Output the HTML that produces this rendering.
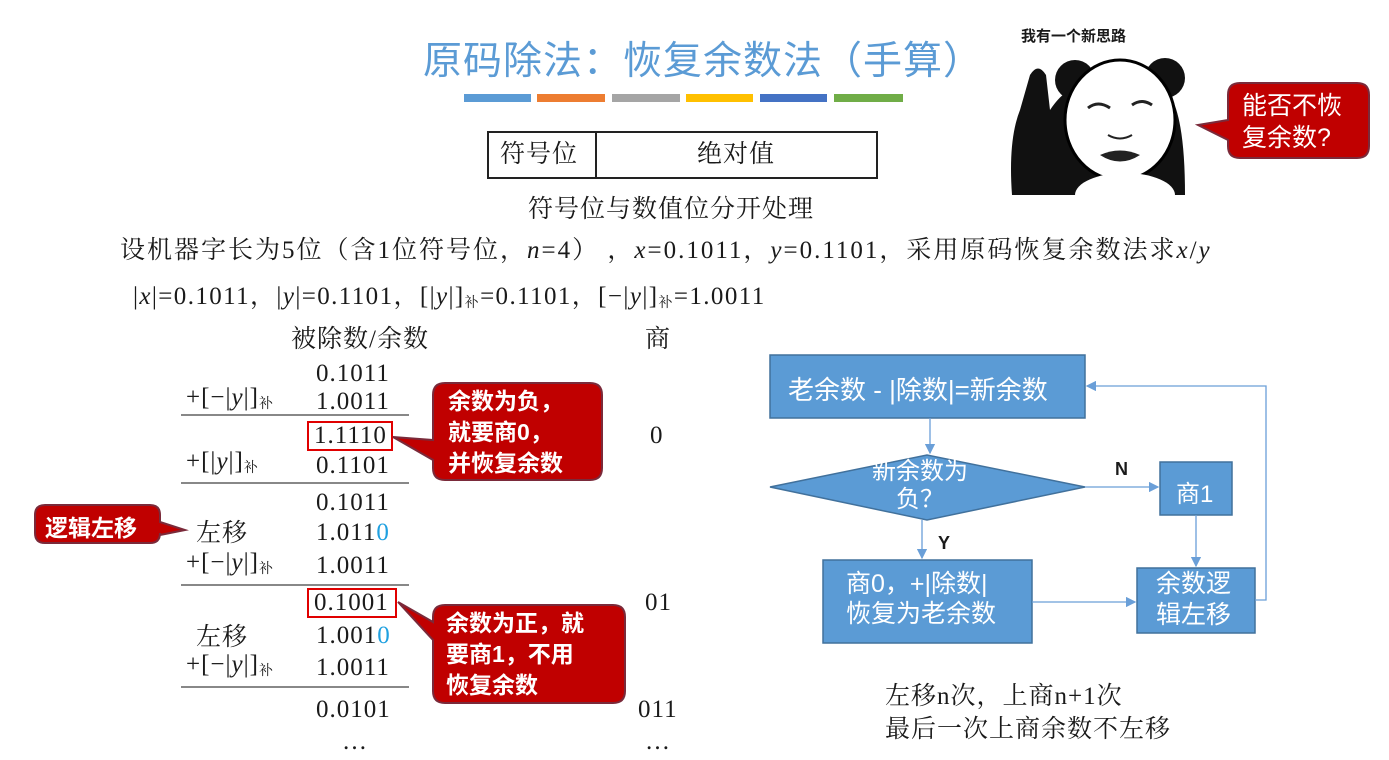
<!DOCTYPE html>
<html><head><meta charset="utf-8"><style>
body{margin:0;width:1389px;height:760px;background:#fff;position:relative;overflow:hidden;font-family:"Liberation Serif","Noto Serif CJK SC",serif;color:#1a1a1a}
.a{position:absolute;white-space:nowrap}
.s{font-family:"Liberation Sans","Noto Sans CJK SC",sans-serif}
.n{font-size:25px;letter-spacing:1px;line-height:28px}
i{font-style:italic}
sub{font-size:14px;vertical-align:-3px}
.hr{position:absolute;height:2px;background:#888}
.red{position:absolute;border:2px solid #e00000}
.blue{color:#1fa0e0}
</style></head><body>
<div class="a s" style="left:423px;top:30px;font-size:39px;color:#5b9bd5;letter-spacing:1px">原码除法：恢复余数法（手算）</div>
<div class="a" style="left:464px;top:94px;width:67px;height:8px;background:#5b9bd5"></div>
<div class="a" style="left:537px;top:94px;width:68px;height:8px;background:#ed7d31"></div>
<div class="a" style="left:612px;top:94px;width:68px;height:8px;background:#a5a5a5"></div>
<div class="a" style="left:686px;top:94px;width:67px;height:8px;background:#ffc000"></div>
<div class="a" style="left:760px;top:94px;width:67px;height:8px;background:#4472c4"></div>
<div class="a" style="left:834px;top:94px;width:69px;height:8px;background:#70ad47"></div>

<div class="a" style="left:487px;top:131px;width:387px;height:44px;border:2px solid #222"></div>
<div class="a" style="left:595px;top:131px;width:2px;height:47px;background:#222"></div>
<div class="a n" style="left:500px;top:141px">符号位</div>
<div class="a n" style="left:697px;top:141px">绝对值</div>
<div class="a n" style="left:528px;top:196px">符号位与数值位分开处理</div>
<div class="a n" style="left:120px;top:237px;letter-spacing:2px">设机器字长为5位（含1位符号位，<i>n</i>=4）&nbsp;，<i>x</i>=0.1011，<i>y</i>=0.1101，采用原码恢复余数法求<i>x</i>/<i>y</i></div>
<div class="a n" style="left:133px;top:283px;letter-spacing:1.4px">|<i>x</i>|=0.1011，|<i>y</i>|=0.1101，[|<i>y</i>|]<sub>补</sub>=0.1101，[−|<i>y</i>|]<sub>补</sub>=1.0011</div>

<div class="a n" style="left:291px;top:326px">被除数/余数</div>
<div class="a n" style="left:645px;top:326px">商</div>
<div class="a n" style="left:316px;top:360px">0.1011</div>
<div class="a n" style="left:186px;top:384px">+[−|<i>y</i>|]<sub>补</sub></div>
<div class="a n" style="left:316px;top:388px">1.0011</div>
<div class="hr" style="left:181px;top:414px;width:228px"></div>
<div class="a n" style="left:314px;top:422px">1.1110</div>
<div class="red" style="left:307px;top:421px;width:82px;height:26px"></div>
<div class="a n" style="left:650px;top:422px">0</div>
<div class="a n" style="left:186px;top:448px">+[|<i>y</i>|]<sub>补</sub></div>
<div class="a n" style="left:316px;top:452px">0.1101</div>
<div class="hr" style="left:181px;top:482px;width:228px"></div>
<div class="a n" style="left:316px;top:489px">0.1011</div>
<div class="a n" style="left:196px;top:520px">左移</div>
<div class="a n" style="left:316px;top:519px">1.011<span class="blue">0</span></div>
<div class="a n" style="left:186px;top:549px">+[−|<i>y</i>|]<sub>补</sub></div>
<div class="a n" style="left:316px;top:552px">1.0011</div>
<div class="hr" style="left:181px;top:584px;width:228px"></div>
<div class="a n" style="left:314px;top:589px">0.1001</div>
<div class="red" style="left:307px;top:588px;width:86px;height:26px"></div>
<div class="a n" style="left:645px;top:589px">01</div>
<div class="a n" style="left:196px;top:624px">左移</div>
<div class="a n" style="left:316px;top:622px">1.001<span class="blue">0</span></div>
<div class="a n" style="left:186px;top:651px">+[−|<i>y</i>|]<sub>补</sub></div>
<div class="a n" style="left:316px;top:654px">1.0011</div>
<div class="hr" style="left:181px;top:686px;width:228px"></div>
<div class="a n" style="left:316px;top:696px">0.0101</div>
<div class="a n" style="left:638px;top:696px">011</div>
<div class="a n" style="left:342px;top:728px">…</div>
<div class="a n" style="left:645px;top:728px">…</div>

<svg class="a" style="left:0;top:0" width="1389" height="760">
<defs><marker id="ar" markerWidth="8" markerHeight="8" refX="7" refY="4" orient="auto"><path d="M0,0 L8,4 L0,8z" fill="#6a9fd8"/></marker></defs>
<g fill="#c00000" stroke="#7a2a3a" stroke-width="2">
<path d="M445,383 H590 Q602,383 602,395 V468 Q602,480 590,480 H445 Q433,480 433,468 V460 L393,437 L433,440 V395 Q433,383 445,383Z"/>
<path d="M445,605 H613 Q625,605 625,617 V691 Q625,703 613,703 H445 Q433,703 433,691 V640 L398,602 L433,622 V617 Q433,605 445,605Z"/>
<path d="M45,505 H150 Q160,505 160,515 V522 L185,530 L160,535 V533 Q160,543 150,543 H45 Q35,543 35,533 V515 Q35,505 45,505Z"/>
<path d="M1240,83 H1357 Q1369,83 1369,95 V146 Q1369,158 1357,158 H1240 Q1228,158 1228,146 V140 L1198,125 L1228,120 V95 Q1228,83 1240,83Z"/>
</g>
<g fill="#5b9bd5" stroke="#41719c" stroke-width="1.5">
<rect x="770" y="355" width="315" height="63"/>
<path d="M770,487 L927,455 L1085,487 L927,520Z"/>
<rect x="1160" y="462" width="72" height="53"/>
<rect x="823" y="560" width="209" height="83"/>
<rect x="1137" y="568" width="118" height="65"/>
</g>
<g stroke="#6a9fd8" stroke-width="1.3" fill="none">
<path d="M930,418 V453" marker-end="url(#ar)"/>
<path d="M1085,487 H1158" marker-end="url(#ar)"/>
<path d="M922,520 V558" marker-end="url(#ar)"/>
<path d="M1196,515 V566" marker-end="url(#ar)"/>
<path d="M1032,602 H1135" marker-end="url(#ar)"/>
<path d="M1255,600 H1266 V386 H1087" marker-end="url(#ar)"/>
</g>
<g>
<path d="M1012,195 Q1008,140 1020,110 L1030,75 Q1038,62 1046,75 L1050,110 Q1060,95 1070,90 L1170,95 Q1185,120 1185,195Z" fill="#111"/>
<circle cx="1075" cy="80" r="20" fill="#111"/>
<circle cx="1165" cy="78" r="20" fill="#111"/>
<ellipse cx="1120" cy="120" rx="55" ry="60" fill="#fff" stroke="#000" stroke-width="3"/>
<ellipse cx="1125" cy="195" rx="50" ry="22" fill="#fff"/>
<path d="M1088,108 Q1098,100 1110,108 M1132,105 Q1142,98 1152,105" stroke="#222" stroke-width="3" fill="none"/>
<path d="M1108,135 Q1120,142 1132,135" stroke="#222" stroke-width="2" fill="none"/>
<path d="M1100,155 Q1120,146 1140,155 Q1120,168 1100,155Z" fill="#222"/>
</g>
</svg>
<div class="a s" style="left:1021px;top:25px;font-size:15px;font-weight:bold">我有一个新思路</div>
<div class="a s" style="left:1242px;top:90px;font-size:25px;line-height:32px;color:#fff">能否不恢<br>复余数?</div>
<div class="a s" style="left:448px;top:386px;font-size:23px;line-height:31px;color:#fff;font-weight:bold">余数为负，<br>就要商0，<br>并恢复余数</div>
<div class="a s" style="left:446px;top:608px;font-size:23px;line-height:31px;color:#fff;font-weight:bold">余数为正，就<br>要商1，不用<br>恢复余数</div>
<div class="a s" style="left:45px;top:509px;font-size:23px;color:#fff;font-weight:bold">逻辑左移</div>
<div class="a s" style="left:788px;top:370px;font-size:26px;color:#fff">老余数 - |除数|=新余数</div>
<div class="a s" style="left:872px;top:458px;font-size:24px;line-height:28px;color:#fff;text-align:center">新余数为<br>负？</div>
<div class="a s" style="left:1115px;top:459px;font-size:18px;font-weight:bold">N</div>
<div class="a s" style="left:938px;top:533px;font-size:18px;font-weight:bold">Y</div>
<div class="a s" style="left:1176px;top:474px;font-size:24px;color:#fff">商1</div>
<div class="a s" style="left:846px;top:569px;font-size:25px;line-height:30px;color:#fff">商0，+|除数|<br>恢复为老余数</div>
<div class="a s" style="left:1156px;top:569px;font-size:25px;line-height:31px;color:#fff">余数逻<br>辑左移</div>
<div class="a n" style="left:885px;top:680px;line-height:33px">左移n次，上商n+1次<br>最后一次上商余数不左移</div>
</body></html>
